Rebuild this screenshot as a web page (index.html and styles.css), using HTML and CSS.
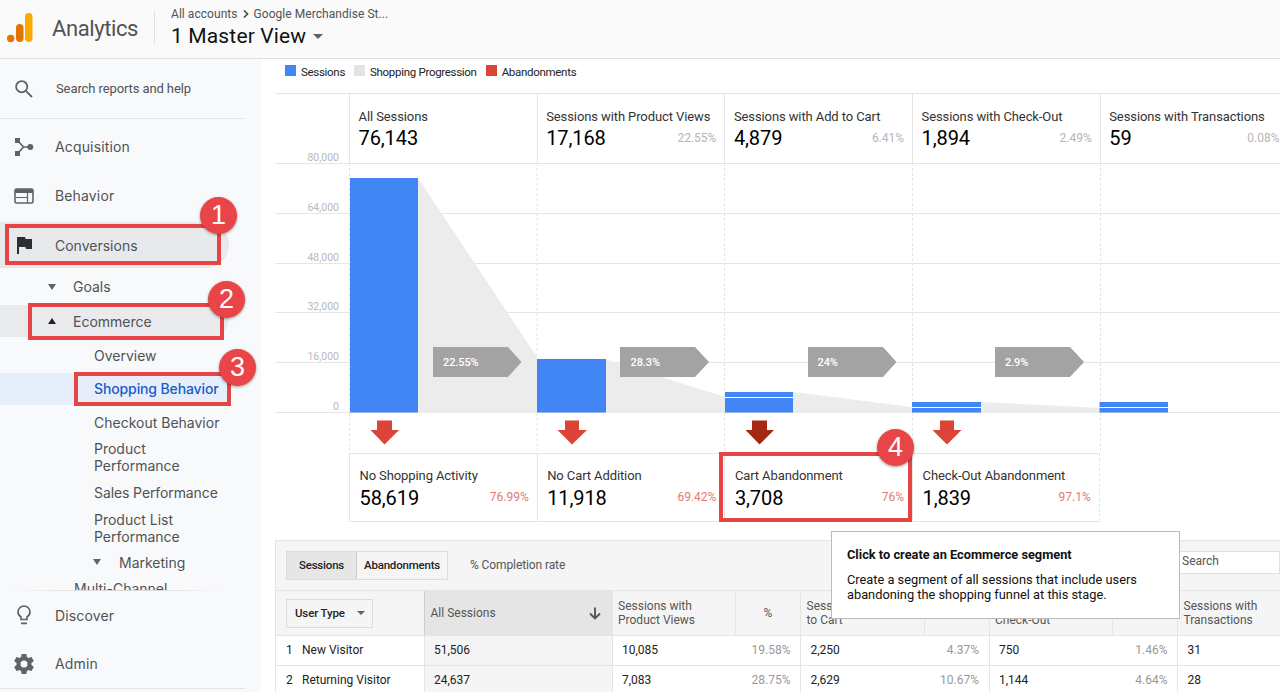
FILE: index.html
```html
<!DOCTYPE html>
<html lang="en">

<head>
    <meta charset="utf-8">
    <link rel="stylesheet" href="styles.css">
    <title>Analytics</title>
</head>

<body>
    <header class="topbar">
        <svg class="logo" width="26" height="30" viewBox="0 0 26 30">
            <rect x="18" y="0" width="7.5" height="29" rx="3.7" fill="#f9ab00" />
            <rect x="9" y="11" width="7.5" height="18" rx="3.7" fill="#e37400" />
            <circle cx="3.7" cy="25.4" r="3.7" fill="#e37400" />
        </svg>
        <div class="brand">Analytics</div>
        <div class="account">
            <div class="crumbs">
                <span>All accounts</span>
                <svg width="6" height="8" viewBox="0 0 6 8"><path d="M1 0.5 L4.6 4 L1 7.5" fill="none" stroke="#444" stroke-width="1.5" /></svg>
                <span>Google Merchandise St...</span>
            </div>
            <div class="view"><span>1 Master View</span><i class="caret"></i></div>
        </div>
    </header>

    <div class="page">
        <nav class="sidebar">
            <div class="search">
                <svg width="18" height="18" viewBox="0 0 18 18" fill="none" stroke="#5f6368" stroke-width="1.8"><circle cx="6.7" cy="6.7" r="5.6" /><path d="M10.8 10.8 L17 17" /></svg>
                <span>Search reports and help</span>
            </div>
            <div class="menu">
                <div class="item">
                    <svg width="20" height="20" viewBox="0 0 20 20" fill="#5f6368"><path d="M1 1h5v5H1zM1 14h5v5H1z" /><circle cx="16.3" cy="10" r="3" /><path d="M4 4 L9.5 10 L4 16 M9.5 10 H16" fill="none" stroke="#5f6368" stroke-width="1.7" /></svg>
                    <span>Acquisition</span>
                </div>
                <div class="item">
                    <svg width="20" height="18" viewBox="0 0 20 18"><rect x="1" y="2" width="18" height="14" rx="1.5" fill="none" stroke="#5f6368" stroke-width="1.6" /><path d="M1 2h18v4H1z" fill="#5f6368" /><path d="M2 10.5h11M13.5 6v10" stroke="#5f6368" stroke-width="1.2" /></svg>
                    <span>Behavior</span>
                </div>
                <div class="item active">
                    <svg width="20" height="18" viewBox="0 0 20 18"><path d="M3 1h8l.6 2H18v10h-6l-.6-2H5v7H3z" fill="#2b2f33" /></svg>
                    <span>Conversions</span>
                </div>
                <div class="sub goals"><i class="caret small"></i><span>Goals</span></div>
                <div class="sub open"><i class="caret small up"></i><span>Ecommerce</span></div>
                <div class="leaf overview">Overview</div>
                <div class="leaf selected">Shopping Behavior</div>
                <div class="leaf">Checkout Behavior</div>
                <div class="leaf two">Product<br>Performance</div>
                <div class="leaf sales">Sales Performance</div>
                <div class="leaf two">Product List<br>Performance</div>
                <div class="sub marketing"><i class="caret small"></i><span>Marketing</span></div>
                <div class="channel">Multi-Channel</div>
            </div>
            <div class="bottom">
                <div class="item">
                    <svg width="20" height="20" viewBox="0 0 20 20" fill="none" stroke="#5f6368" stroke-width="1.7"><path d="M7 14.5v-2.5C5 10.8 4 9 4 7a6 6 0 0 1 12 0c0 2-1 3.8-3 5v2.5zM7 18.4h6" /></svg>
                    <span>Discover</span>
                </div>
                <div class="item">
                    <svg width="20" height="20" viewBox="2 2 20 20" fill="#5f6368"><path d="M19.43 12.98c.04-.32.07-.64.07-.98s-.03-.66-.07-.98l2.11-1.65c.19-.15.24-.42.12-.64l-2-3.46c-.12-.22-.39-.3-.61-.22l-2.49 1c-.52-.4-1.08-.73-1.69-.98l-.38-2.65A.49.49 0 0 0 14 2h-4c-.25 0-.46.18-.49.42l-.38 2.65c-.61.25-1.17.59-1.69.98l-2.49-1c-.23-.09-.49 0-.61.22l-2 3.46c-.13.22-.07.49.12.64l2.11 1.65c-.04.32-.07.65-.07.98s.03.66.07.98l-2.11 1.65c-.19.15-.24.42-.12.64l2 3.46c.12.22.39.3.61.22l2.49-1c.52.4 1.08.73 1.69.98l.38 2.65c.03.24.24.42.49.42h4c.25 0 .46-.18.49-.42l.38-2.65c.61-.25 1.17-.59 1.69-.98l2.49 1c.23.09.49 0 .61-.22l2-3.46c.12-.22.07-.49-.12-.64zM12 15.5a3.5 3.5 0 1 1 0-7 3.5 3.5 0 0 1 0 7z" /></svg>
                    <span>Admin</span>
                </div>
            </div>
        </nav>

        <main class="report">
            <div class="legend">
                <span><i class="blue"></i>Sessions</span>
                <span><i class="gray"></i>Shopping Progression</span>
                <span><i class="red"></i>Abandonments</span>
            </div>

            <div class="stages">
                <div class="stage"><p>All Sessions</p><b>76,143</b></div>
                <div class="stage"><p>Sessions with Product Views</p><b>17,168</b><em>22.55%</em></div>
                <div class="stage"><p>Sessions with Add to Cart</p><b>4,879</b><em>6.41%</em></div>
                <div class="stage"><p>Sessions with Check-Out</p><b>1,894</b><em>2.49%</em></div>
                <div class="stage"><p>Sessions with Transactions</p><b>59</b><em>0.08%</em></div>
            </div>

            <svg class="plot" width="1005" height="290" viewBox="275 163 1005 290">
                <!-- grid -->
                <path class="grid" d="M275 163.5H1280M275 213.5H1280M275 263.5H1280M275 312.5H1280M275 362.5H1280M275 412.5H1280" />
                <path class="dash" d="M349.5 163V453M537 163V453M724.5 163V453M912.5 163V453M1100.5 163V453" />
                <g class="axis">
                    <text x="339" y="161">80,000</text>
                    <text x="339" y="211">64,000</text>
                    <text x="339" y="260.5">48,000</text>
                    <text x="339" y="310">32,000</text>
                    <text x="339" y="360">16,000</text>
                    <text x="339" y="410">0</text>
                </g>
                <!-- progression -->
                <path class="flow" d="M418 178L537 357V413H418zM606 359.5L725 397V413H606zM793 392L912 407V413H793zM981 402L1100 408V413H981z" />
                <!-- sessions -->
                <path class="bars" d="M350 178h68v234.5h-68zM537 359h69v53.5h-69zM725 392h68v20.5h-68zM912 402h69v10.5h-69zM1099.5 402h68.5v10.5h-68.5z" />
                <path class="gap" d="M725 397.5h68M912 407.5h69M1099.5 407.5h68.5" />
                <!-- progression tags -->
                <path class="tag" d="M433 347h75l13.5 15-13.5 15h-75zM620 347h75l14 15-14 15h-75zM808 347h75l13.5 15-13.5 15h-75zM995 347h75l14 15-14 15h-75z" />
                <g class="tagtext">
                    <text x="443" y="365.5">22.55%</text>
                    <text x="630.5" y="365.5">28.3%</text>
                    <text x="817.5" y="365.5">24%</text>
                    <text x="1005" y="365.5">2.9%</text>
                </g>
                <!-- abandonment arrows -->
                <path fill="#db4437" d="M377 420.5h15v9.5h7l-14.5 14.5L370.5 430h6.5zM565 420.5h14v9.5h8l-15 14.5L557.5 430h7.5zM940 420.5h14v9.5h7.5L947 444.5 932.5 430h7.5z" />
                <path fill="#a52714" d="M752 420.5h15v9.5h7l-14.5 14.5L745.5 430h6.5z" />
            </svg>

            <div class="exits">
                <div class="stage"><p>No Shopping Activity</p><b>58,619</b><em>76.99%</em></div>
                <div class="stage"><p>No Cart Addition</p><b>11,918</b><em>69.42%</em></div>
                <div class="stage"><p>Cart Abandonment</p><b>3,708</b><em>76%</em></div>
                <div class="stage"><p>Check-Out Abandonment</p><b>1,839</b><em>97.1%</em></div>
            </div>

            <div class="tools">
                <div class="toggle"><span class="on">Sessions</span><span>Abandonments</span></div>
                <span class="rate">% Completion rate</span>
                <div class="find">Search</div>
            </div>
            <div class="row head">
                <div class="dim"><span class="select">User Type<i class="caret"></i></span></div>
                <div class="total">All Sessions
                    <svg width="12" height="13" viewBox="0 0 12 13" fill="none" stroke="#555" stroke-width="1.9"><path d="M6 0.5V11.5M1 6.5L6 11.5L11 6.5" /></svg>
                </div>
                <div class="num">Sessions with<br>Product Views</div><div class="pct">%</div>
                <div class="num">Sessions with Add<br>to Cart</div><div class="pct">%</div>
                <div class="num">Sessions with<br>Check-Out</div><div class="pct">%</div>
                <div class="num last">Sessions with<br>Transactions</div>
            </div>
            <div class="row">
                <div class="dim"><span class="index">1</span>New Visitor</div><div class="total">51,506</div>
                <div class="num">10,085</div><div class="pct">19.58%</div>
                <div class="num">2,250</div><div class="pct">4.37%</div>
                <div class="num">750</div><div class="pct">1.46%</div>
                <div class="num last">31</div>
            </div>
            <div class="row">
                <div class="dim"><span class="index">2</span>Returning Visitor</div><div class="total">24,637</div>
                <div class="num">7,083</div><div class="pct">28.75%</div>
                <div class="num">2,629</div><div class="pct">10.67%</div>
                <div class="num">1,144</div><div class="pct">4.64%</div>
                <div class="num last">28</div>
            </div>
        </main>
    </div>

    <div class="tooltip">
        <strong>Click to create an Ecommerce segment</strong>
        <p>Create a segment of all sessions that include users<br>abandoning the shopping funnel at this stage.</p>
    </div>

    <div class="mark mark1"><span>1</span></div>
    <div class="mark mark2"><span>2</span></div>
    <div class="mark mark3"><span>3</span></div>
    <div class="mark mark4"><span>4</span></div>
</body>

</html>
```
FILE: styles.css
```css
* {
    box-sizing: border-box;
}

body {
    margin: 0;
    width: 1280px;
    height: 692px;
    overflow: hidden;
    position: relative;
    font-family: Roboto, Arial, sans-serif;
    font-size: 12px;
    color: #222;
    background-color: #fff;
}

p {
    margin: 0;
}

.caret {
    display: inline-block;
    border: 5px solid transparent;
    border-top-color: #5f6368;
    border-bottom: 0;
}

.caret.small {
    border-width: 6px 4px 0;
}

.caret.up {
    border-top: 0;
    border-bottom: 6px solid #222;
}

/* top bar */
.topbar {
    display: flex;
    align-items: center;
    height: 59px;
    padding-left: 7px;
    background-color: #fafafa;
    border-bottom: 1px solid #e0e0e0;
}

.logo {
    margin-bottom: 2px;
}

.brand {
    width: 121px;
    padding-left: 19px;
    font-size: 22px;
    letter-spacing: -0.4px;
    color: #505356;
    margin-bottom: 1px;
}

.account {
    height: 33px;
    margin-bottom: 4px;
    padding-left: 16px;
    border-left: 1px solid #e0e0e0;
    display: flex;
    flex-direction: column;
    justify-content: center;
}

.crumbs {
    display: flex;
    flex: none;
    align-items: center;
    gap: 5px;
    height: 18px;
    letter-spacing: 0.05px;
    color: #505356;
}

.view {
    display: flex;
    flex: none;
    align-items: center;
    gap: 7px;
    height: 27px;
    font-size: 21px;
    letter-spacing: 0.15px;
    color: #111;
}

.page {
    display: flex;
    height: 633px;
}

/* sidebar */
.sidebar {
    flex: none;
    width: 261px;
    background-color: #f8f9fb;
    font-family: Inter, sans-serif;
    font-size: 14px;
    color: #505356;
}

.search {
    display: flex;
    align-items: center;
    gap: 23px;
    width: 245px;
    height: 60px;
    padding-left: 15px;
    border-bottom: 1px solid #e3e4e6;
    font-family: Roboto, sans-serif;
    font-size: 13px;
    letter-spacing: -0.1px;
}

.menu {
    height: 471px;
    padding-top: 3px;
    overflow: hidden;
}

.item {
    display: flex;
    align-items: center;
    gap: 21px;
    width: 229px;
    height: 49px;
    padding-left: 14px;
    letter-spacing: 0.15px;
}

.item.active {
    height: 46px;
    margin-top: 2px;
    border-radius: 0 23px 23px 0;
    background-color: #e8e9ed;
    letter-spacing: 0;
}

.sub {
    display: flex;
    align-items: center;
    gap: 17px;
    height: 32px;
    padding-left: 48px;
}

.goals {
    height: 37px;
}

.open {
    width: 228px;
    border-radius: 0 16px 16px 0;
    background-color: #e8eaed;
}

.leaf {
    height: 34px;
    padding-left: 94px;
    line-height: 36px;
}

.leaf.overview {
    height: 36px;
    line-height: 38px;
}

.leaf.selected {
    width: 231px;
    height: 32px;
    line-height: 32px;
    background-color: #e6eefc;
    color: #1a5bc8;
    font-weight: 500;
    letter-spacing: -0.12px;
}

.leaf.two {
    height: 39px;
    line-height: 17px;
    padding-top: 1px;
}

.leaf.sales {
    height: 26px;
    margin-top: 6px;
    line-height: 17px;
    letter-spacing: -0.1px;
}

.marketing {
    height: 26px;
    padding-left: 93px;
    gap: 18px;
}

.channel {
    padding-left: 74px;
    height: 28px;
    line-height: 28px;
}

.bottom {
    width: 245px;
    height: 98px;
    border-top: 1px solid;
    border-image: linear-gradient(to right, transparent 5%, #d8d8d8 40%, #d8d8d8 60%, transparent 90%) 1;
}

.bottom .item {
    height: 48px;
}

.bottom .item:last-child {
    height: 50px;
    border-bottom: 1px solid #e3e4e6;
    width: 245px;
}

/* report */
.report {
    flex: none;
    width: 1019px;
    padding-left: 14px;
}

.legend {
    display: flex;
    gap: 9px;
    height: 34px;
    padding: 5px 0 0 10px;
    font-size: 11.5px;
    line-height: 16px;
    letter-spacing: -0.3px;
}

.legend i {
    display: inline-block;
    width: 11px;
    height: 11px;
    margin-right: 5px;
}

.legend .blue {
    background-color: #4285f4;
}

.legend .gray {
    background-color: #e4e4e4;
}

.legend .red {
    background-color: #db4437;
}

.stages,
.exits {
    display: grid;
    grid-template-columns: repeat(5, 187.7px);
    padding-left: 74px;
}

.stages {
    height: 70px;
    border-top: 1px solid #e5e5e5;
    overflow: hidden;
}

.stage {
    display: grid;
    grid-template-columns: 1fr auto;
    grid-template-rows: 16px 28px;
    align-content: start;
    align-items: center;
    padding: 14px 8px 0 9px;
    border-left: 1px solid #e5e5e5;
    white-space: nowrap;
}

.stage p {
    grid-column: 1 / 3;
    margin-left: -0.5px;
    font-size: 13px;
    letter-spacing: -0.1px;
    color: #333;
}

.stage b {
    margin-left: -0.5px;
    font-size: 20px;
    font-weight: 400;
    letter-spacing: -0.1px;
    color: #000;
}

.stage em {
    font-style: normal;
    color: #b5b5b5;
}

.plot {
    display: block;
    overflow: visible;
}

.grid {
    stroke: #e5e5e5;
}

.dash {
    stroke: #e5e5e5;
    stroke-dasharray: 3 2;
}

.axis {
    font-size: 10.5px;
    fill: #b8b8b8;
    text-anchor: end;
}

.flow {
    fill: #ececec;
}

.bars {
    fill: #4285f4;
}

.gap {
    stroke: #fff;
}

.tag {
    fill: #a3a3a3;
}

.tagtext {
    font-size: 11px;
    font-weight: 500;
    letter-spacing: -0.1px;
    fill: #fff;
}

.exits {
    height: 69px;
    grid-template-columns: repeat(4, 187.7px);
}

.exits .stage {
    padding-top: 13px;
    padding-left: 10px;
    border-top: 1px solid #e5e5e5;
    border-bottom: 1px solid #e5e5e5;
}

.exits .stage:last-child {
    border-right: 1px dashed #e5e5e5;
}

.exits b {
    padding-top: 1px;
}

.exits em {
    color: #e07b73;
}

/* table */
.tools {
    display: flex;
    align-items: center;
    height: 51px;
    margin-top: 18px;
    padding-left: 10px;
    border: 1px solid #e5e5e5;
    border-right: 0;
    background-color: #f5f5f5;
}

.toggle {
    display: flex;
    height: 29px;
    border: 1px solid #dcdcdc;
    line-height: 27px;
    font-size: 11.5px;
    font-weight: 500;
    letter-spacing: -0.2px;
    text-align: center;
}

.toggle span {
    width: 90px;
}

.toggle .on {
    width: 70px;
    border-right: 1px solid #ccc;
    background-color: #e6e6e6;
}

.rate {
    flex: 1;
    padding: 0 0 2px 22px;
    letter-spacing: -0.1px;
    color: #555;
}

.find {
    width: 110px;
    height: 23px;
    margin-bottom: 7px;
    padding-left: 11px;
    border: 1px solid #e0e0e0;
    background-color: #fff;
    line-height: 19px;
    color: #555;
}

.row {
    display: grid;
    grid-template-columns: 148.5px 188px 123.5px 65px 123.5px 65px 123.5px 65px 103px;
    height: 30px;
    border-bottom: 1px solid #e5e5e5;
    line-height: 29px;
}

.row > div {
    border-left: 1px solid #e5e5e5;
}

.row .dim {
    padding-left: 10px;
}

.index {
    display: inline-block;
    width: 16px;
}

.row .total {
    padding-left: 9.5px;
    background-color: #f5f5f5;
}

.row .num {
    padding-left: 9.5px;
}

.row .pct {
    padding-right: 9.5px;
    border-left-color: transparent;
    text-align: right;
    color: #999;
}

.row.head {
    height: 45px;
    background-color: #f5f5f5;
    color: #555;
}

.head > div {
    display: flex;
    align-items: center;
    line-height: 14px;
}

.head .total {
    justify-content: space-between;
    padding: 0 11px 0 6px;
    border-left-color: #ccc;
    background-color: #e5e5e5;
}

.row.head .num {
    padding-left: 5.5px;
}

.row.head .pct {
    justify-content: center;
    padding: 0;
    border-left-color: #e5e5e5;
    color: #555;
}

.select {
    display: flex;
    align-items: center;
    justify-content: space-between;
    width: 87px;
    height: 29px;
    padding: 0 7px 0 8px;
    border: 1px solid #dcdcdc;
    font-size: 11.5px;
    font-weight: 500;
    letter-spacing: -0.15px;
    color: #222;
}

.select .caret {
    border-width: 4px 4px 0;
}

.tooltip {
    position: absolute;
    left: 831px;
    top: 531px;
    width: 349px;
    height: 88px;
    padding: 15px;
    border: 1px solid #bbb;
    background-color: #fff;
    font-size: 12.8px;
    line-height: 15px;
    color: #111;
}

.tooltip p {
    margin-top: 10px;
}

/* numbered callouts */
.mark {
    position: absolute;
    border: 4px solid #e64545;
}

.mark span {
    position: absolute;
    top: -31px;
    right: -20px;
    width: 37px;
    height: 37px;
    border-radius: 50%;
    background-color: #e94548;
    box-shadow: 0 1px 3px rgba(0, 0, 0, 0.4);
    font-family: "Liberation Sans", Arial, sans-serif;
    font-size: 27px;
    line-height: 37px;
    text-align: center;
    color: #fff;
}

.mark1 {
    left: 5px;
    top: 224px;
    width: 216px;
    height: 41px;
}

.mark2 {
    left: 28px;
    top: 303px;
    width: 196px;
    height: 37px;
}

.mark2 span {
    top: -26px;
    right: -25px;
}

.mark3 {
    left: 74px;
    top: 372px;
    width: 157px;
    height: 34px;
}

.mark3 span {
    top: -27px;
    right: -29px;
}

.mark4 {
    left: 719px;
    top: 452px;
    width: 193px;
    height: 70px;
}

.mark4 span {
    top: -27px;
    right: -6px;
}
```
